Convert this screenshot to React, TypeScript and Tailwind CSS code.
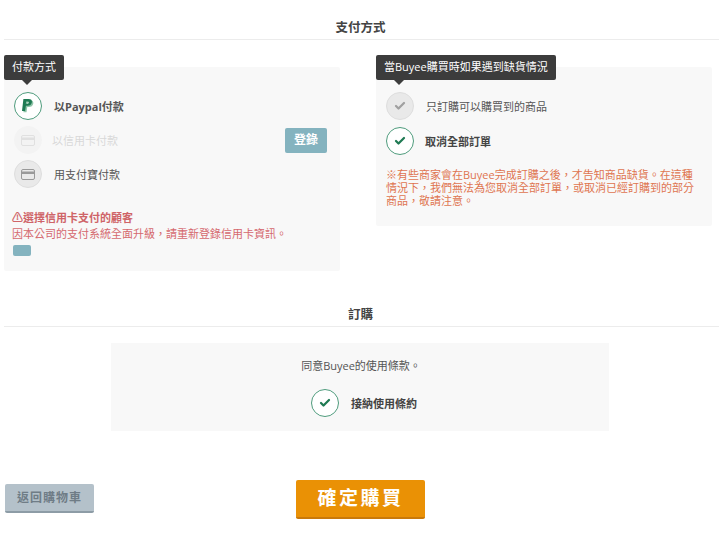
import type { ReactNode } from 'react'
import { Check } from 'lucide-react'

const font = "font-['Open_Sans','Noto_Sans_CJK_TC',sans-serif]"

function CardIcon() {
  return (
    <svg width="14" height="11" viewBox="0 0 14 11">
      <rect x="0.5" y="0.5" width="13" height="10" rx="1.5" fill="none" stroke="#999" />
      <rect x="1" y="2.5" width="12" height="2.5" fill="#999" />
    </svg>
  )
}

function PaypalIcon() {
  const p = 'M2.4 0h5.2c2.4 0 3.7 1.2 3.3 3.3-.4 2.4-2.1 3.5-4.4 3.5H4.9L4.1 12H1zM5.2 2.4l-.4 2.3h1.3c.9 0 1.6-.4 1.7-1.3.1-.7-.3-1-1.1-1z'
  return (
    <svg width="14" height="15" viewBox="0 0 14 15">
      <path d={p} transform="translate(1.4 1.2)" fill="#8fc4a8" fillRule="evenodd" />
      <path d={p} fill="#1f7a53" fillRule="evenodd" />
    </svg>
  )
}

function Radio({ on, dim, children }: { on?: boolean; dim?: boolean; children: ReactNode }) {
  const ring = on
    ? 'bg-white border-[#4f9c7d]'
    : dim
      ? 'bg-[#f2f2f2] border-[#f2f2f2] opacity-70'
      : 'bg-[#e9e9e9] border-[#dedede]'
  return (
    <span className={`flex h-[28px] w-[28px] shrink-0 items-center justify-center rounded-full border ${ring}`}>
      {children}
    </span>
  )
}

function Tip({ children }: { children: ReactNode }) {
  return (
    <div className="absolute left-0 top-[-12px] z-10 flex h-[25px] items-center rounded-[2px] bg-[#3c3c3c] px-[8px] text-[11px] text-white">
      {children}
      <span className="absolute bottom-[-5px] left-[18px] h-0 w-0 border-x-[5px] border-t-[5px] border-x-transparent border-t-[#3c3c3c]" />
    </div>
  )
}

function Heading({ children }: { children: ReactNode }) {
  return (
    <div className="border-b border-[#ececec] pl-[4px] text-center text-[12.5px] font-bold text-[#444]">
      {children}
    </div>
  )
}

export default function App() {
  return (
    <div className={`h-[539px] w-[719px] overflow-hidden bg-white ${font}`}>
      <div className="ml-[4px] pt-[18px]">
        <Heading>
          <div className="h-[21px] -translate-x-[3px] leading-[20px]">支付方式</div>
        </Heading>
      </div>

      <div className="ml-[4px] mt-[27px] flex items-start gap-[36px]">
        <section className="relative h-[204px] w-[336px] rounded-[2px] bg-[#f8f8f8] px-[10px] pt-[25px]">
          <Tip>付款方式</Tip>
          <div className="flex h-[28px] items-center gap-[12px]">
            <Radio on><PaypalIcon /></Radio>
            <span className="pt-[2px] text-[11px] font-bold text-[#555]">以Paypal付款</span>
          </div>
          <div className="mt-[6px] flex h-[28px] items-center gap-[10px]">
            <Radio dim><span className="opacity-30"><CardIcon /></span></Radio>
            <span className="flex-1 pt-[2px] text-[11px] text-[#d8d8d8]">以信用卡付款</span>
            <button className="mr-[3px] h-[25px] w-[42px] rounded-[2px] bg-[#84b3bf] text-[12px] font-bold text-white">登錄</button>
          </div>
          <div className="mt-[6px] flex h-[28px] items-center gap-[12px]">
            <Radio><CardIcon /></Radio>
            <span className="pt-[2px] text-[11px] text-[#555]">用支付寶付款</span>
          </div>
          <div className="-mx-[2px] mt-[22px] text-[11px] leading-[16px] text-[#d5686e]">
            <p className="font-bold text-[#cf6468]">⚠選擇信用卡支付的顧客</p>
            <p>因本公司的支付系統全面升級，請重新登錄信用卡資訊。</p>
          </div>
          <div className="-ml-[1px] mt-[3px] h-[11px] w-[18px] rounded-[2px] bg-[#84b3bf]" />
        </section>

        <section className="relative h-[159px] w-[336px] rounded-[2px] bg-[#f8f8f8] px-[10px] pt-[25px]">
          <Tip>當Buyee購買時如果遇到缺貨情況</Tip>
          <div className="flex h-[28px] items-center gap-[12px]">
            <Radio><Check size={12} strokeWidth={4.5} className="text-[#a0a0a0]" /></Radio>
            <span className="pt-[3px] text-[11px] text-[#555]">只訂購可以購買到的商品</span>
          </div>
          <div className="mt-[7px] flex h-[28px] items-center gap-[11px]">
            <Radio on><Check size={12} strokeWidth={4.5} className="text-[#1f7a53]" /></Radio>
            <span className="pt-[2px] text-[11px] font-bold text-[#444]">取消全部訂單</span>
          </div>
          <p className="mt-[13px] text-[11px] leading-[13px] text-[#df7550]">
            ※有些商家會在Buyee完成訂購之後，才告知商品缺貨。在這種情況下，我們無法為您取消全部訂單，或取消已經訂購到的部分商品，敬請注意。
          </p>
        </section>
      </div>

      <div className="ml-[4px] mt-[34px]">
        <Heading>
          <div className="h-[21px] -translate-x-[3px] leading-[20px]">訂購</div>
        </Heading>
      </div>

      <section className="ml-[111px] mt-[16px] h-[88px] w-[498px] bg-[#f8f8f8] pt-[14px]">
        <p className="pl-[2px] text-center text-[11px] leading-[18px] text-[#555]">同意Buyee的使用條款。</p>
        <div className="ml-[200px] mt-[14px] flex h-[28px] items-center gap-[12px]">
          <Radio on><Check size={12} strokeWidth={4.5} className="text-[#1f7a53]" /></Radio>
          <span className="pt-[2px] text-[11px] font-bold text-[#444]">接納使用條約</span>
        </div>
      </section>

      <div className="mt-[49px] flex items-start">
        <button className="ml-[5px] mt-[4px] h-[29px] w-[89px] rounded-[2px] border-b-2 border-[#8d9ca6] bg-[#b4c1ca] text-[12px] font-bold tracking-[1px] text-[#6f7c86]">
          返回購物車
        </button>
        <button className="ml-[202px] h-[39px] w-[129px] rounded-[2px] border-b-2 border-[#c9790a] bg-[#ea9105] text-[19px] font-bold tracking-[2.5px] text-white">
          確定購買
        </button>
      </div>
    </div>
  )
}
